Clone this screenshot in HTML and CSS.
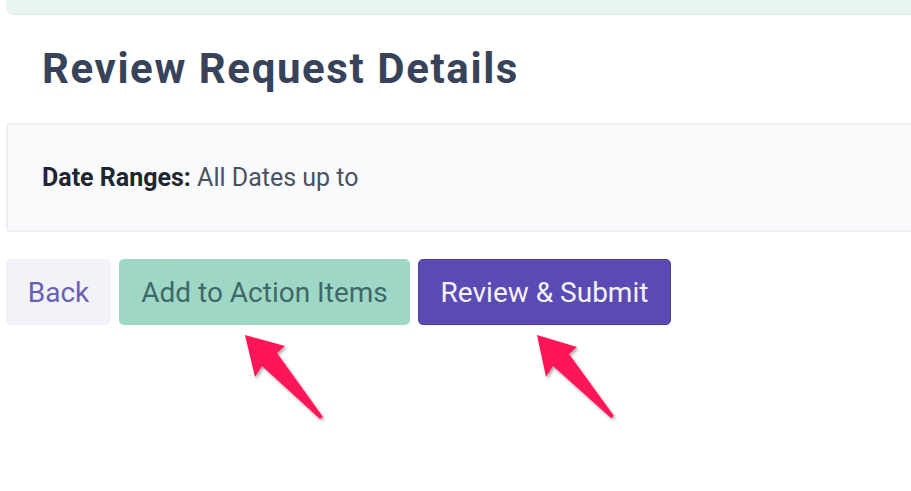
FILE: index.html
```html
<!DOCTYPE html>
<html>
<head>
<meta charset="utf-8">
<link rel="stylesheet" href="styles.css">
</head>
<body>
<div class="page">
  <div class="topbar"></div>
  <h1 class="title">Review Request Details</h1>
  <div class="card">
    <p class="line"><strong>Date Ranges:</strong> All Dates up to</p>
  </div>
  <div class="actions">
    <button class="btn btn-back">Back</button>
    <button class="btn btn-add">Add to Action Items</button>
    <button class="btn btn-submit">Review &amp; Submit</button>
  </div>
  <svg class="arrows" width="911" height="491" viewBox="0 0 911 491">
    <defs>
      <filter id="sh" x="-20%" y="-20%" width="140%" height="140%">
        <feDropShadow dx="1.5" dy="2" stdDeviation="1.5" flood-color="#000" flood-opacity="0.35"/>
      </filter>
    </defs>
    <polygon filter="url(#sh)" fill="#ff1558" points="245,335 285,346 277,353 323,417 320,419 262,366 255,377"/>
    <polygon filter="url(#sh)" fill="#ff1558" points="537,335 577,347 569,354 614,416 611,418 553,366 546,377"/>
  </svg>
</div>
</body>
</html>
```
FILE: styles.css
```css
html, body {
  margin: 0;
  padding: 0;
  background: #ffffff;
}
body {
  font-family: Roboto, "Liberation Sans", Arial, sans-serif;
  width: 911px;
  height: 491px;
  overflow: hidden;
}
.page {
  position: relative;
  padding-left: 6px;
  height: 491px;
}
.topbar {
  height: 14px;
  margin-right: -20px;
  background: #e8f5f0;
  border-bottom: 1px solid #dde9e5;
  border-radius: 0 0 0 8px;
}
.title {
  margin: 0;
  padding: 31px 0 0 36px;
  height: 78px;
  box-sizing: border-box;
  font-size: 42px;
  font-weight: 700;
  line-height: 46px;
  color: #37435a;
  letter-spacing: 1.6px;
}
.card {
  margin-top: 30px;
  margin-right: -20px;
  height: 109px;
  box-sizing: border-box;
  background: #f9fafc;
  border: 2px solid #eceef2;
  border-radius: 4px;
  display: flex;
  align-items: center;
  padding: 0 34px;
}
.line {
  margin: 0;
  font-size: 25px;
  color: #4a5262;
}
.line strong {
  color: #1f2633;
  font-weight: 700;
}
.actions {
  display: flex;
  gap: 8px;
  margin-top: 27px;
}
.btn {
  height: 66px;
  border: none;
  border-radius: 5px;
  font-family: Roboto, "Liberation Sans", Arial, sans-serif;
  font-size: 28px;
  padding: 0;
  cursor: pointer;
}
.btn-back {
  width: 105px;
  background: #f1f3f9;
  color: #6a5fb3;
}
.btn-add {
  width: 291px;
  background: #9fd7c7;
  color: #3f6868;
}
.btn-submit {
  width: 253px;
  background: #5a4bb4;
  color: #f4f2fb;
  border: 1px solid #4c3fa3;
}
.arrows {
  position: absolute;
  left: 0;
  top: 0;
  pointer-events: none;
}
```
